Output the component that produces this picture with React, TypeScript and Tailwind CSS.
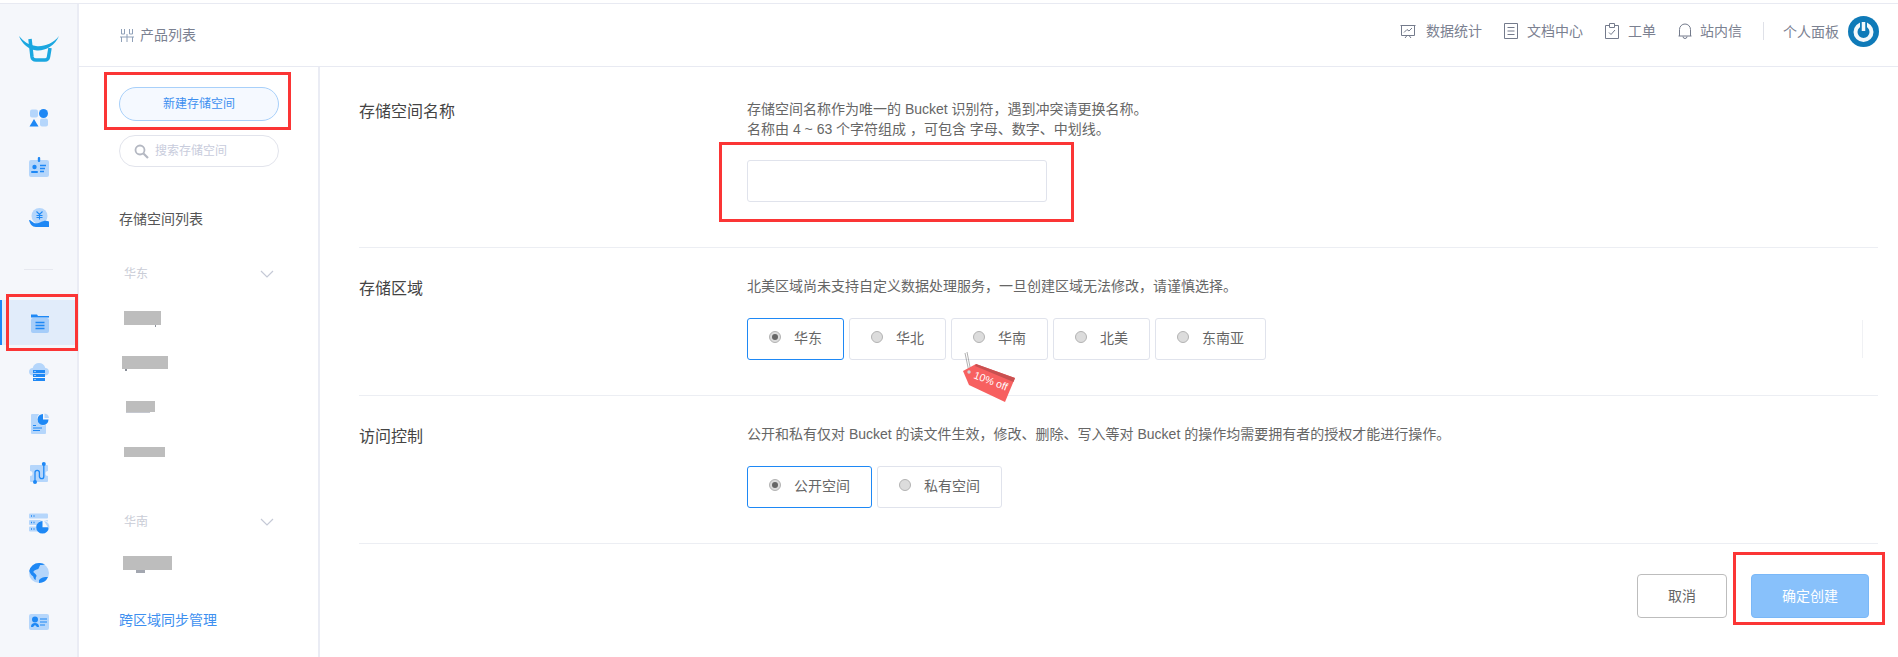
import React from "react";

const L = "#b5d6fb";
const B = "#1e88f5";

function Svg({ children, w = 24, h = 24 }: { children: React.ReactNode; w?: number; h?: number }) {
  return (
    <svg width={w} height={h} viewBox={`0 0 ${w} ${h}`} fill="none" className="block">
      {children}
    </svg>
  );
}

const NavIcons: React.ReactNode[] = [
  <Svg key="a">
    <rect x="3" y="3.5" width="8" height="8" rx="2" fill={L} />
    <circle cx="16.5" cy="7.5" r="4.5" fill={B} />
    <path d="M7 13l4.5 7.5h-9z" fill={B} />
    <rect x="13" y="12.5" width="8" height="8" rx="2" fill={L} />
  </Svg>,
  <Svg key="b">
    <rect x="2" y="4" width="20" height="17" rx="2" fill={L} />
    <rect x="10.8" y="1" width="2.4" height="5" rx="1" fill={B} />
    <circle cx="7.5" cy="11" r="2.2" fill={B} />
    <rect x="4" y="15" width="7" height="2" rx="1" fill={B} />
    <path d="M13 9.5h6M13 12.5h5M13 15.5h4" stroke={B} strokeWidth="1.4" />
  </Svg>,
  <Svg key="c">
    <circle cx="12.5" cy="10" r="8" fill={L} />
    <path d="M9.5 5.5l3 3 3-3M12.5 8.5v5M9.5 9.5h6M9.5 11.5h6" stroke={B} strokeWidth="1.1" />
    <path d="M2 14c2 0 3 2 5 3 2 .6 5 .2 7-1 2-1 5-2 8-.5V21H9c-4 0-6-3-7-7z" fill={B} />
  </Svg>,
  <Svg key="d">
    <path d="M3 3.5h6l1 1.5H21v1.5H3z" fill={B} />
    <rect x="3" y="7" width="18" height="15" rx="2" fill="#a6cdf9" />
    <path d="M7.5 11.5h9M7.5 14.5h9M7.5 17.5h9" stroke={B} strokeWidth="1.5" />
  </Svg>,
  <Svg key="e">
    <path d="M6 14.5c-2.500 0-4-1.800-4-3.800s1.500-3.700 3.700-3.700C6.500 3.800 9 2 12 2s5.500 1.800 6.300 5c2.200 0 3.700 1.700 3.700 3.700s-1.500 3.800-4 3.800z" fill={L} />
    <rect x="6" y="9" width="12" height="3" fill={B} />
    <rect x="6" y="13" width="12" height="3" fill={B} />
    <rect x="6" y="17" width="12" height="3" fill={B} />
    <path d="M7.500 10.500h1M7.500 14.500h1M7.500 18.500h1" stroke="#fff" strokeWidth="1" />
  </Svg>,
  <Svg key="f">
    <rect x="4" y="3" width="15" height="20" rx="1" fill={L} />
    <circle cx="16.5" cy="8" r="6.5" fill="#f5f7fb" />
    <path d="M16 3a5.500 5.500 0 1 0 5.500 5.500H16z" fill={B} />
    <path d="M17.500 2.500a5 5 0 0 1 4.500 4.500h-4.500z" fill={L} />
    <path d="M6 14.500h3M6 17h9M6 19.500h7" stroke={B} strokeWidth="1" />
  </Svg>,
  <Svg key="g">
    <path d="M4 4h16a1 1 0 0 1 1 1v5a2.500 2.500 0 0 0 0 5v5a1 1 0 0 1-1 1H4a1 1 0 0 1-1-1v-5a2.500 2.500 0 0 0 0-5V5a1 1 0 0 1 1-1z" fill={L} />
    <path d="M8 21V11.500a2.200 2.200 0 0 1 4.400 0v4a2.200 2.200 0 0 0 4.400 0V3" stroke={B} strokeWidth="1.3" />
    <circle cx="8" cy="21" r="2" fill={B} />
    <circle cx="16.800" cy="3" r="2" fill={B} />
  </Svg>,
  <Svg key="h">
    <rect x="2" y="2.500" width="19" height="5" rx="1" fill={L} />
    <rect x="2" y="9" width="19" height="5" rx="1" fill={L} />
    <rect x="2" y="15.500" width="19" height="5" rx="1" fill={L} />
    <path d="M4 5h1M6.500 5h1M4 11.500h1M6.500 11.500h1M4 18h1M6.500 18h1" stroke={B} strokeWidth="1.5" />
    <circle cx="16.5" cy="16" r="7" fill="#f5f7fb" />
    <path d="M15.500 10a6.300 6.300 0 1 0 6.300 6.300h-6.300z" fill={B} />
    <path d="M17 10a6 6 0 0 1 5 8z" fill={L} />
  </Svg>,
  <Svg key="i">
    <circle cx="12" cy="12" r="10" fill={L} />
    <path d="M12 2a10 10 0 0 0-9.800 8c1 3 3 5 4 5.500.5 2 1 3 2.500 3.500 0-2 0-3 1-4-.5-2-2.500-3-3.500-4 1-2 3-2.500 5-3 1-1.500 1.500-3 2-4 3 0 4-.5 5-.5A10 10 0 0 0 12 2z" fill={B} />
    <path d="M12 19c2-2.500 5-3 9-3a10 10 0 0 1-9 6z" fill={B} />
  </Svg>,
  <Svg key="j">
    <rect x="2" y="3" width="20" height="16" rx="2" fill={L} />
    <circle cx="8" cy="8.500" r="3" fill={B} />
    <path d="M4 16c0-3 1.500-4 4-4s4 1 4 4h-2l-2-2-2 2z" fill={B} />
    <path d="M13 8h7M13 11h7M13 14h5" stroke={B} strokeWidth="1.2" />
  </Svg>,
];

const HeaderIcon = ({ children }: { children: React.ReactNode }) => (
  <svg width="16" height="16" viewBox="0 0 16 16" fill="none" stroke="#747b8c" strokeWidth="1" className="block shrink-0">
    {children}
  </svg>
);

function Radio({ label, on, tag }: { label: string; on?: boolean; tag?: boolean }) {
  return (
    <div
      className={`relative h-[42px] flex items-center pl-[21px] pr-[20px] gap-[13px] rounded-[3px] border bg-white ${
        on ? "border-[#1e88f5]" : "border-[#e0e3ec]"
      }`}
    >
      <span className="relative -top-[2px] size-[12px] rounded-full border border-[#b3b3b3] bg-[#dcdcdc] flex items-center justify-center">
        {on && <span className="size-[6px] rounded-full bg-[#666666]" />}
      </span>
      <span className="relative -top-px mr-px text-[14px] text-[#666666] leading-5">{label}</span>
      {tag && (
        <svg width="70" height="65" viewBox="0 0 70 65" className="absolute left-[3px] top-[26px] overflow-visible">
          <path d="M10 8L14 27M12 7L15.600 25" stroke="#9a9a9a" strokeWidth="0.8" fill="none" />
          <path d="M8 26L21 19 60 33 50 57 14 40z" fill="#f76060" />
          <path d="M21 19L60 33 58.500 37 20 21z" fill="#c95050" />
          <circle cx="14" cy="27" r="1.700" fill="#cfd6da" />
          <text x="18" y="33" fill="#ffffff" fontSize="10.5" transform="rotate(21 18 33)" fontFamily="'Liberation Sans', sans-serif">
            10% off
          </text>
        </svg>
      )}
    </div>
  );
}

function Section({ title, children, className }: { title: string; children: React.ReactNode; className: string }) {
  return (
    <section className={`flex border-b border-[#eceef3] ${className}`}>
      <h2 className="w-[388px] shrink-0 mt-[3px] text-[16px] leading-5 font-normal text-[#444444]">{title}</h2>
      <div className="flex-1 min-w-0">{children}</div>
    </section>
  );
}

const Redact = ({ className, children }: { className: string; children?: React.ReactNode }) => (
  <div className={`relative bg-[#bdbdbd] ${className}`}>{children}</div>
);

const Chevron = () => (
  <svg width="14" height="8" viewBox="0 0 14 8" fill="none" stroke="#c5c9d6" strokeWidth="1.2">
    <path d="M1 1l6 6 6-6" />
  </svg>
);

export default function App() {
  return (
    <div className="w-[1898px] h-[657px] overflow-hidden bg-white pt-[3px] font-['Liberation_Sans','Noto_Sans_CJK_SC',sans-serif]">
      <div className="flex h-full border-t border-[#e8eaf2]">
        {/* Icon rail */}
        <aside className="relative w-[79px] shrink-0 bg-[#f5f7fb] border-r-2 border-[#eaecf4] flex flex-col items-stretch">
          <div className="h-[89px] pt-[32px] pl-[19px]">
            <svg width="40" height="26" viewBox="0 0 40 26" fill="none">
              <path d="M0 0C5 6 10 9 17 10C24 11 34 8 40 0C36 10 26 15 18 14.500C10 14 3 8 0 0Z" fill="#1ba7e0" />
              <path d="M11 3L13 21Q13.500 24 17 24L26 24Q29 24 29.500 21L31 12" stroke="#1ba7e0" strokeWidth="3.5" />
            </svg>
          </div>
          {NavIcons.slice(0, 3).map((ic, i) => (
            <div key={i} className="h-[50px] flex items-center justify-center">
              {ic}
            </div>
          ))}
          <div className="mt-[26px] mb-[30px] mx-[24px] h-px bg-[#e6e8ef]" />
          <div className="relative h-[45px] mb-[3px] bg-[#e1ecfa] flex items-center justify-center border-l-2 border-[#1e88f5]">
            <div>{NavIcons[3]}</div>
            <div className="absolute left-[4px] -right-[1px] -top-[6px] -bottom-[6px] border-[3px] border-[#fb3535]" />
          </div>
          {NavIcons.slice(4).map((ic, i) => (
            <div key={i} className="h-[50px] flex items-center justify-center">
              {ic}
            </div>
          ))}
        </aside>

        <div className="flex-1 min-w-0 flex flex-col">
          {/* Header */}
          <header className="h-[63px] shrink-0 border-b border-[#e8eaf2] flex items-center pl-[41px] pr-[19px] text-[14px] text-[#7b8191]">
            <svg width="14" height="13" viewBox="0 0 14 13" fill="none" stroke="#8fa0b8" strokeWidth="1">
              <path d="M1.500 0v5h3V0M9.500 0v5h3V0M0 8h14M1.500 8v5M7 5v8M12.500 8v5" />
            </svg>
            <span className="ml-[6px] leading-5">产品列表</span>
            <nav className="ml-auto -mt-[8px] flex items-center">
              <HeaderIcon>
                <path d="M.5 2.500h15M1.500 2.500v10h13v-10M5 15l2-2.500M11 15l-2-2.500M4 9.500l3-3 2 1.500 3-3" />
              </HeaderIcon>
              <span className="ml-[10px] leading-5">数据统计</span>
              <span className="ml-[21px]">
                <HeaderIcon>
                  <path d="M1.500 .5h13v15h-13zM4.500 4.500h7M4.500 8h7M4.500 11.500h7" />
                </HeaderIcon>
              </span>
              <span className="ml-[8px] leading-5">文档中心</span>
              <span className="ml-[21px]">
                <HeaderIcon>
                  <path d="M5 2.500H1.500v13h13v-13H11M5.500 .5h5v4h-5zM5 9.500l2 2 4-4.500" />
                </HeaderIcon>
              </span>
              <span className="ml-[8px] leading-5">工单</span>
              <span className="ml-[21px]">
                <HeaderIcon>
                  <path d="M2.500 13V6.500a5.500 5.500 0 0 1 11 0V13M1.500 13h13M6 13.500a2 2 0 0 0 4 0" />
                </HeaderIcon>
              </span>
              <span className="ml-[7px] leading-5">站内信</span>
              <span className="ml-[21px] w-px h-[18px] bg-[#dfe1e8]" />
              <span className="ml-[19px] mt-[2px] leading-5">个人面板</span>
              <svg width="31" height="31" viewBox="0 0 31 31" className="ml-[9px] block">
                <circle cx="15.500" cy="15.500" r="15.500" fill="#0f7ab8" />
                <circle cx="15.500" cy="16" r="8" fill="none" stroke="#f3f8fb" strokeWidth="4" />
                <path d="M15.500 5v10" stroke="#0f7ab8" strokeWidth="7" />
                <path d="M15.500 6v9" stroke="#f3f8fb" strokeWidth="3.5" />
              </svg>
            </nav>
          </header>

          <div className="flex-1 min-h-0 flex">
            {/* Bucket list */}
            <aside className="w-[241px] shrink-0 border-r-2 border-[#eaecf4] pl-[40px] pr-[39px] pt-[20px]">
              <div className="relative">
                <button className="w-full h-[34px] rounded-full border border-[#a8d0fa] bg-[#f5f9ff] text-[12px] text-[#3d8ff0]">
                  新建存储空间
                </button>
                <div className="absolute -left-[15px] -right-[12px] -top-[15px] -bottom-[9px] border-[3px] border-[#fb3535]" />
              </div>
              <div className="mt-[14px] h-[32px] rounded-full border border-[#e2e4ec] flex items-center pl-[14px] gap-[6px] text-[12px] text-[#c8ccdc]">
                <svg width="15" height="15" viewBox="0 0 15 15" fill="none" stroke="#b4b8c2">
                  <circle cx="6" cy="6" r="4.500" strokeWidth="1.8" />
                  <path d="M9.500 9.500L14 14" strokeWidth="2.2" />
                </svg>
                <span>搜索存储空间</span>
              </div>
              <div className="mt-[42px] text-[14px] leading-5 text-[#555555]">存储空间列表</div>
              <div className="mt-[35px] pl-[5px] pr-[5px] flex items-center justify-between text-[12px] leading-5 text-[#c9ccd6]">
                <span>华东</span>
                <Chevron />
              </div>
              <Redact className="mt-[27px] ml-[5px] w-[37px] h-[14px]">
                <span className="absolute left-[31px] top-full w-px h-[2px] bg-[#8a8f99]" />
              </Redact>
              <Redact className="mt-[31px] ml-[3px] w-[46px] h-[13px]">
                <span className="absolute left-[3px] top-full w-[2px] h-[2px] bg-[#8a8f99]" />
              </Redact>
              <Redact className="mt-[32px] ml-[7px] w-[29px] h-[11px]">
                <span className="absolute left-0 top-full w-[24px] h-px bg-[#c5c8d0]" />
              </Redact>
              <Redact className="mt-[35px] ml-[5px] w-[41px] h-[10px]" />
              <div className="mt-[55px] pl-[5px] pr-[5px] flex items-center justify-between text-[12px] leading-5 text-[#c9ccd6]">
                <span>华南</span>
                <Chevron />
              </div>
              <Redact className="mt-[24px] ml-[4px] w-[49px] h-[14px]">
                <span className="absolute left-[13px] top-full w-[9px] h-[3px] bg-[#a3a7b0]" />
              </Redact>
              <div className="mt-[40px] text-[14px] leading-5 text-[#3d8ff0]">跨区域同步管理</div>
            </aside>

            {/* Form */}
            <main className="flex-1 min-w-0 pl-[39px] pr-[20px]">
              <Section title="存储空间名称" className="h-[181px] pt-[32px]">
                <p className="text-[14px] leading-5 text-[#666666]">
                  存储空间名称作为唯一的 Bucket 识别符，遇到冲突请更换名称。
                  <br />
                  名称由 4 ~ 63 个字符组成 ，可包含 字母、数字、中划线。
                </p>
                <div className="relative mt-[21px] w-[300px] h-[42px]">
                  <div className="h-full rounded-[3px] border border-[#e0e3ec] bg-white" />
                  <div className="absolute -left-[28px] -right-[27px] -top-[18px] -bottom-[20px] border-[3px] border-[#fb3535]" />
                </div>
              </Section>
              <Section title="存储区域" className="h-[148px] pt-[28px]">
                <p className="text-[14px] leading-5 text-[#666666]">
                  北美区域尚未支持自定义数据处理服务，一旦创建区域无法修改，请谨慎选择。
                </p>
                <div className="mt-[22px] flex gap-[5px]">
                  <Radio label="华东" on />
                  <Radio label="华北" />
                  <Radio label="华南" tag />
                  <Radio label="北美" />
                  <Radio label="东南亚" />
                  <span className="ml-auto mr-[15px] self-center w-px h-[38px] bg-[#f0f1f4]" />
                </div>
              </Section>
              <Section title="访问控制" className="h-[148px] pt-[28px]">
                <p className="text-[14px] leading-5 text-[#666666]">
                  公开和私有仅对 Bucket 的读文件生效，修改、删除、写入等对 Bucket 的操作均需要拥有者的授权才能进行操作。
                </p>
                <div className="mt-[22px] flex gap-[5px]">
                  <Radio label="公开空间" on />
                  <Radio label="私有空间" />
                </div>
              </Section>
              <div className="mt-[30px] pr-[9px] flex justify-end gap-[24px]">
                <button className="w-[90px] h-[44px] rounded-[4px] border border-[#bdbdbd] bg-white text-[14px] text-[#666666]">
                  取消
                </button>
                <div className="relative">
                  <button className="w-[118px] h-[44px] rounded-[4px] border border-[#7ab8f8] bg-[#88c1fb] text-[14px] text-white">
                    确定创建
                  </button>
                  <div className="absolute -left-[18px] -right-[16px] -top-[22px] -bottom-[7px] border-[3px] border-[#fb3535]" />
                </div>
              </div>
            </main>
          </div>
        </div>
      </div>
    </div>
  );
}
